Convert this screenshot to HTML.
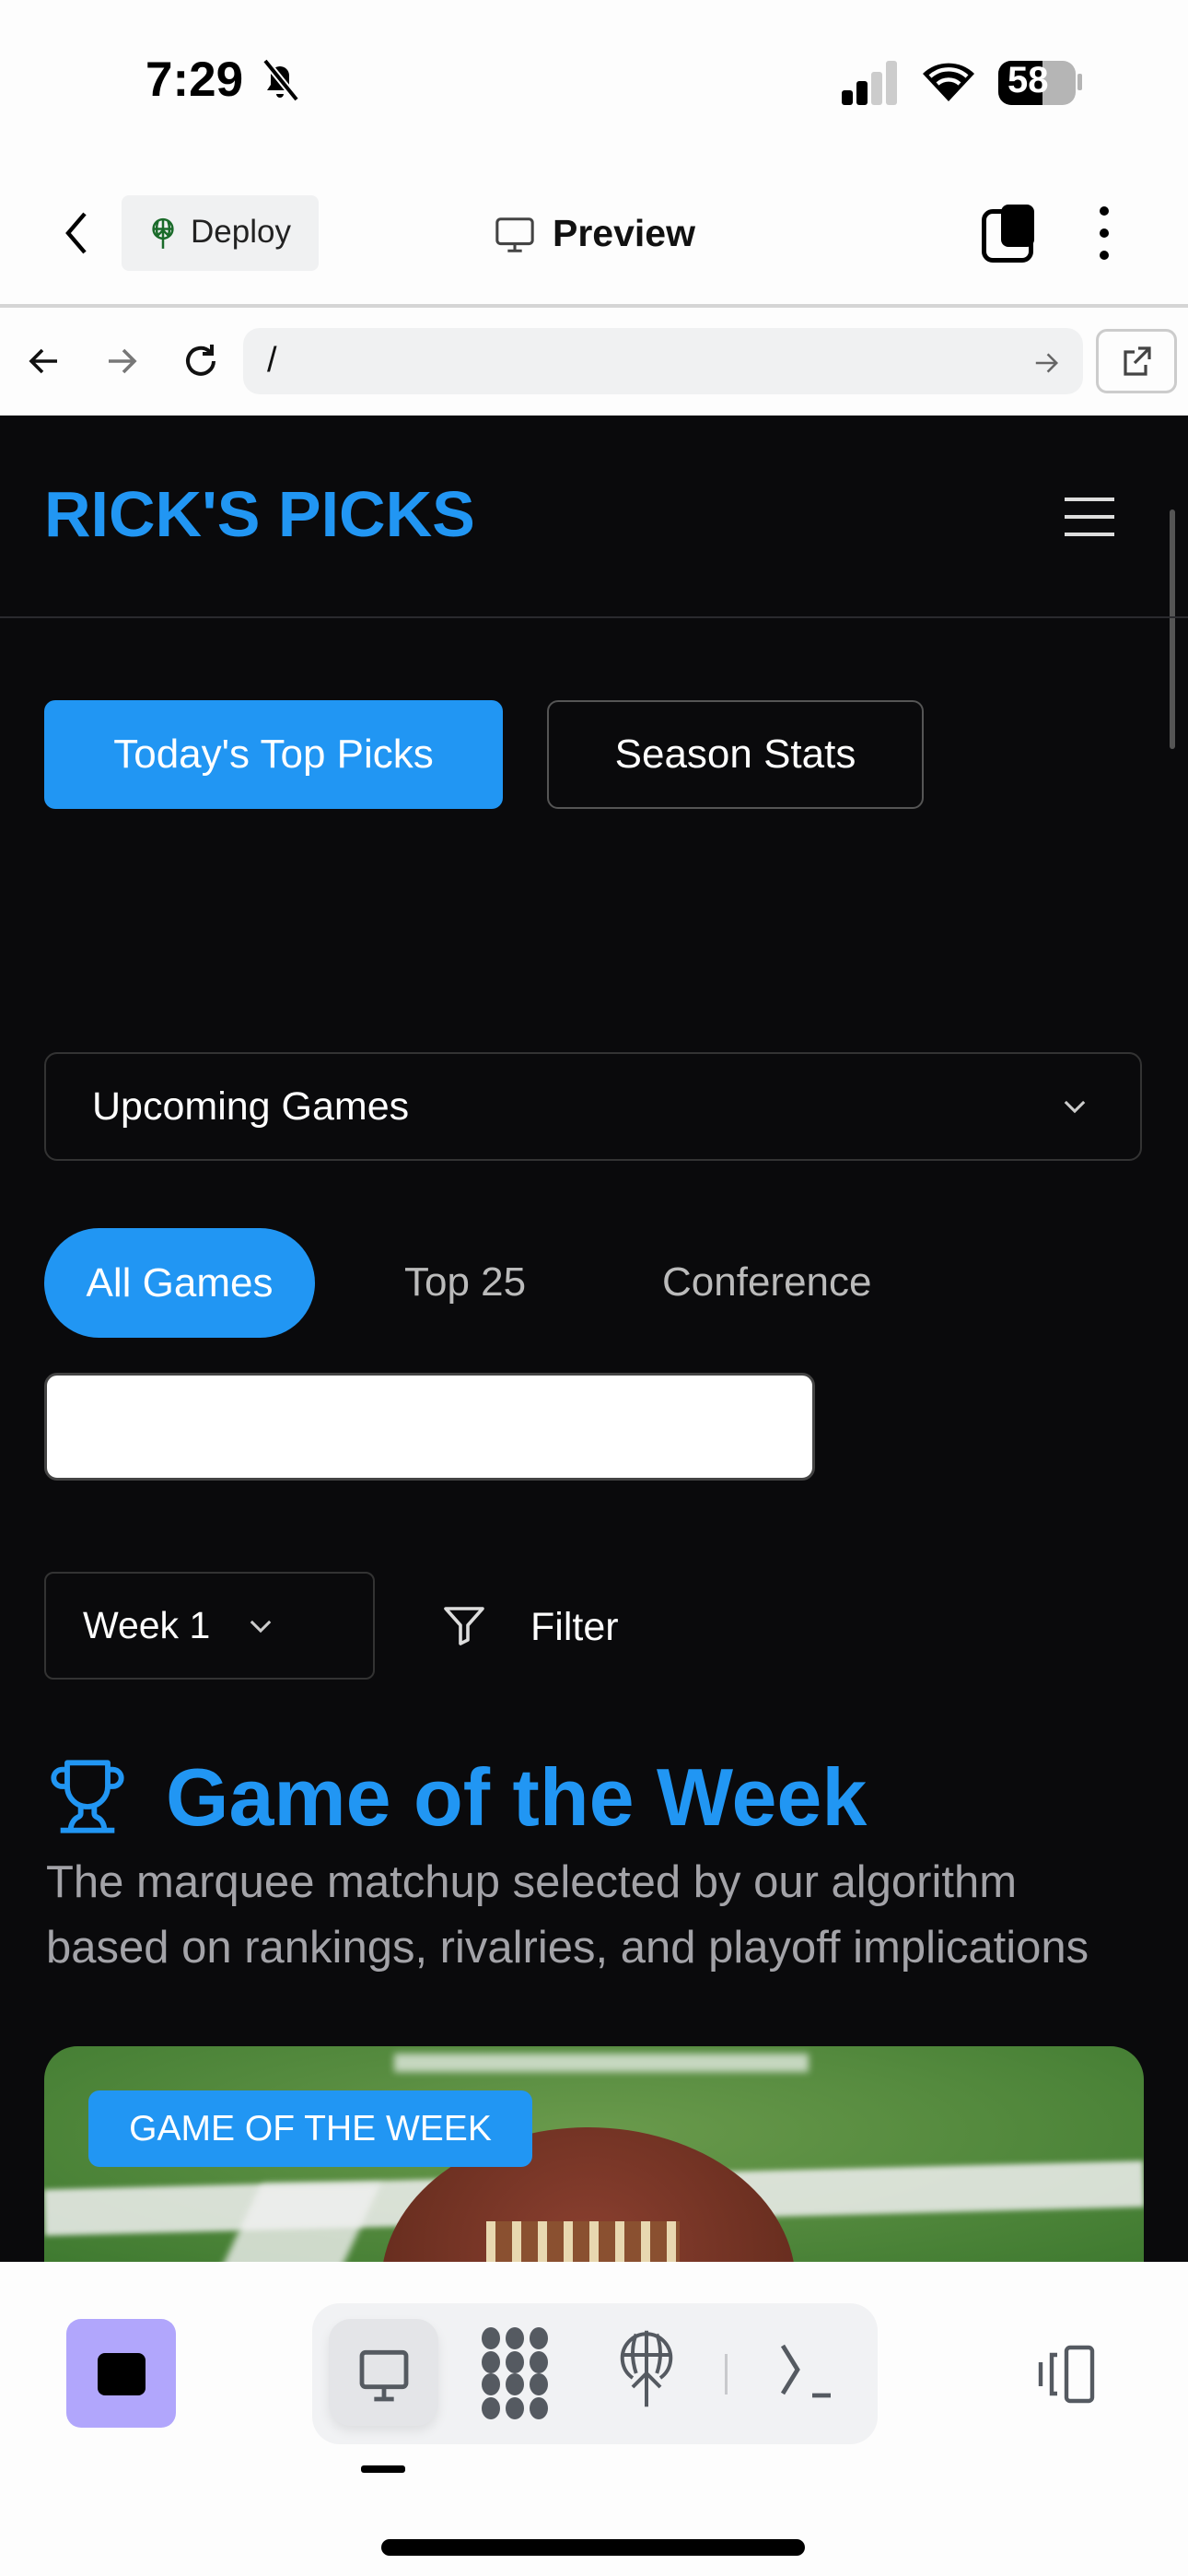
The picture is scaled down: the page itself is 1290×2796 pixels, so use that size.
<!DOCTYPE html>
<html><head><meta charset="utf-8"><style>
*{margin:0;padding:0;box-sizing:border-box}
html,body{width:1290px;height:2796px;overflow:hidden}
body{background:#0a0a0c;font-family:"Liberation Sans",sans-serif;position:relative}
.a{position:absolute}
.t{color:#fff}
</style></head><body>
<div class="a" style="left:0;top:0;width:1290px;height:451px;background:#fdfdfd"></div>
<div class="a" style="left:158px;top:56px;font-size:53px;font-weight:bold;color:#000">7:29</div>
<svg class="a" style="left:280px;top:62px" width="48" height="50" viewBox="0 0 24 25"><path d="M5 18h14l-2-3v-5a5 5 0 0 0-10 0v5z M10 20a2 2 0 0 0 4 0" fill="#000"/><path d="M4 2l17 21" stroke="#fdfdfd" stroke-width="4"/><path d="M4 2l17 21" stroke="#000" stroke-width="2"/></svg>
<div class="a" style="left:914px;top:98px;width:12px;height:16px;background:#000;border-radius:3px"></div>
<div class="a" style="left:930px;top:88px;width:12px;height:26px;background:#000;border-radius:3px"></div>
<div class="a" style="left:946px;top:78px;width:12px;height:36px;background:#ccc;border-radius:3px"></div>
<div class="a" style="left:962px;top:66px;width:12px;height:48px;background:#ccc;border-radius:3px"></div>
<svg class="a" style="left:1000px;top:62px" width="60" height="52" viewBox="0 0 30 26"><path d="M15 24L1 9a20 20 0 0 1 28 0z" fill="#000"/><path d="M5 10.5a15 15 0 0 1 20 0M9 14.5a9 9 0 0 1 12 0" stroke="#fdfdfd" stroke-width="2.2" fill="none"/></svg>
<div class="a" style="left:1084px;top:66px;width:84px;height:48px;border-radius:14px;background:#b5b5b5;overflow:hidden"><div style="width:48px;height:48px;background:#000"></div></div>
<div class="a" style="left:1170px;top:80px;width:5px;height:18px;background:#b5b5b5;border-radius:2px"></div>
<div class="a" style="left:1094px;top:65px;font-size:40px;font-weight:bold;color:#fff">58</div>
<svg class="a" style="left:68px;top:228px" width="30" height="50" viewBox="0 0 15 25"><path d="M12 2L3 12.5 12 23" stroke="#000" stroke-width="2.2" fill="none"/></svg>
<div class="a" style="left:132px;top:212px;width:214px;height:82px;background:#f0f1f2;border-radius:8px"></div>
<svg class="a" style="left:160px;top:236px" width="34" height="36" viewBox="0 0 24 26"><g stroke="#1a6b2a" stroke-width="1.8" fill="none"><circle cx="12" cy="9" r="7.5"/><path d="M4.5 9h15M12 1.5v23M8 3q-2 6 0 12M16 3q2 6 0 12M7 15l5-5 5 5"/></g></svg>
<div class="a" style="left:207px;top:232px;font-size:35px;color:#222">Deploy</div>
<svg class="a" style="left:536px;top:232px" width="46" height="46" viewBox="0 0 24 24"><g stroke="#444" stroke-width="1.6" fill="none"><rect x="2" y="3" width="20" height="14" rx="2"/><path d="M12 17v4M8 21h8"/></g></svg>
<div class="a" style="left:600px;top:230px;font-size:41px;font-weight:bold;color:#111">Preview</div>
<div class="a" style="left:1066px;top:227px;width:56px;height:58px;border:5px solid #000;border-radius:12px"></div>
<div class="a" style="left:1087px;top:222px;width:36px;height:46px;background:#000;border-radius:8px"></div>
<div class="a" style="left:1194px;top:224px;width:10px;height:10px;border-radius:5px;background:#000"></div>
<div class="a" style="left:1194px;top:248px;width:10px;height:10px;border-radius:5px;background:#000"></div>
<div class="a" style="left:1194px;top:272px;width:10px;height:10px;border-radius:5px;background:#000"></div>
<div class="a" style="left:0;top:330px;width:1290px;height:4px;background:#d5d5d5"></div>
<svg class="a" style="left:28px;top:372px" width="40" height="40" viewBox="0 0 20 20"><path d="M17 10H3M9 4l-6 6 6 6" stroke="#111" stroke-width="1.8" fill="none"/></svg>
<svg class="a" style="left:112px;top:372px" width="40" height="40" viewBox="0 0 20 20"><path d="M3 10h14M11 4l6 6-6 6" stroke="#777" stroke-width="1.8" fill="none"/></svg>
<svg class="a" style="left:196px;top:370px" width="44" height="44" viewBox="0 0 22 22"><path d="M18 11a7 7 0 1 1-2-5M17 2v5h-5" stroke="#111" stroke-width="2" fill="none"/></svg>
<div class="a" style="left:264px;top:356px;width:912px;height:72px;background:#f0f1f2;border-radius:18px"></div>
<div class="a" style="left:290px;top:370px;font-size:38px;color:#111">/</div>
<svg class="a" style="left:1120px;top:378px" width="32" height="32" viewBox="0 0 20 20"><path d="M3 10h14M11 4l6 6-6 6" stroke="#666" stroke-width="1.6" fill="none"/></svg>
<div class="a" style="left:1190px;top:357px;width:88px;height:70px;border:3px solid #ccc;border-radius:12px;background:#fdfdfd"></div>
<svg class="a" style="left:1216px;top:372px" width="36" height="40" viewBox="0 0 18 20"><path d="M8 5H3v12h11v-5M10 3h6v6M16 3l-8 8" stroke="#444" stroke-width="1.6" fill="none"/></svg>

<div class="a" style="left:48px;top:518px;font-size:70px;font-weight:bold;color:#2196f3">RICK'S PICKS</div>
<div class="a" style="left:1156px;top:540px;width:54px;height:4px;background:#ddd"></div>
<div class="a" style="left:1156px;top:559px;width:54px;height:4px;background:#ddd"></div>
<div class="a" style="left:1156px;top:578px;width:54px;height:4px;background:#ddd"></div>
<div class="a" style="left:1270px;top:553px;width:6px;height:260px;background:#555;border-radius:3px"></div>
<div class="a" style="left:0;top:669px;width:1290px;height:2px;background:#2a2a2e"></div>
<div class="a t" style="left:48px;top:760px;width:498px;height:118px;background:#2196f3;border-radius:12px;font-size:44px;line-height:118px;text-align:center">Today's Top Picks</div>
<div class="a t" style="left:594px;top:760px;width:409px;height:118px;border:2px solid #555;border-radius:12px;font-size:44px;line-height:114px;text-align:center">Season Stats</div>
<div class="a t" style="left:48px;top:1142px;width:1192px;height:118px;border:2px solid #333;border-radius:14px;font-size:43px;line-height:114px;padding-left:50px">Upcoming Games</div>
<svg class="a" style="left:1150px;top:1184px" width="34" height="34" viewBox="0 0 20 20"><path d="M4 7l6 6 6-6" stroke="#ccc" stroke-width="1.8" fill="none"/></svg>
<div class="a t" style="left:48px;top:1333px;width:294px;height:119px;background:#2196f3;border-radius:60px;font-size:44px;line-height:119px;text-align:center">All Games</div>
<div class="a" style="left:439px;top:1367px;font-size:44px;color:#bbb">Top 25</div>
<div class="a" style="left:719px;top:1367px;font-size:44px;color:#bbb">Conference</div>
<div class="a" style="left:48px;top:1490px;width:837px;height:117px;background:#fff;border:3px solid #444;border-radius:14px"></div>
<div class="a t" style="left:48px;top:1706px;width:359px;height:117px;border:2px solid #333;border-radius:10px;font-size:41px;line-height:113px;padding-left:40px">Week 1</div>
<svg class="a" style="left:266px;top:1748px" width="34" height="34" viewBox="0 0 20 20"><path d="M4 7l6 6 6-6" stroke="#ccc" stroke-width="1.8" fill="none"/></svg>
<svg class="a" style="left:480px;top:1742px" width="48" height="46" viewBox="0 0 24 23"><path d="M2 2h20l-8 9v8l-4 2V11z" stroke="#ddd" stroke-width="1.8" fill="none" stroke-linejoin="round"/></svg>
<div class="a t" style="left:576px;top:1742px;font-size:43px">Filter</div>
<svg class="a" style="left:50px;top:1906px" width="90" height="88" viewBox="0 0 24 24"><g stroke="#2196f3" stroke-width="1.6" fill="none" stroke-linejoin="round"><path d="M6 9H4.5a2.5 2.5 0 0 1 0-5H6M18 9h1.5a2.5 2.5 0 0 0 0-5H18M4 22h16M10 14.7V17c0 .6-.5 1-1 1.2C7.9 18.8 7 20.2 7 22M14 14.7V17c0 .6.5 1 1 1.2 1.2.6 2 2 2 3.8M18 2H6v7a6 6 0 0 0 12 0z"/></g></svg>
<div class="a" style="left:180px;top:1900px;font-size:88px;font-weight:bold;color:#2196f3">Game of the Week</div>
<div class="a" style="left:50px;top:2008px;font-size:49px;line-height:71px;color:#a3a3a8;width:1140px">The marquee matchup selected by our algorithm based on rankings, rivalries, and playoff implications</div>
<div class="a" style="left:48px;top:2221px;width:1194px;height:234px;border-radius:36px 36px 0 0;overflow:hidden;background:radial-gradient(ellipse at 50% 40%,#6a9a4c,#3f7a30)">
 <div class="a" style="left:380px;top:8px;width:450px;height:20px;background:rgba(235,240,235,.75);filter:blur(4px)"></div>
 <div class="a" style="left:0;top:140px;width:1194px;height:50px;background:rgba(240,240,240,.85);filter:blur(3px);transform:rotate(-1.5deg)"></div>
 <div class="a" style="left:200px;top:150px;width:130px;height:150px;background:rgba(240,240,240,.8);filter:blur(4px);transform:skewX(-25deg)"></div>
 <div class="a" style="left:366px;top:88px;width:450px;height:340px;border-radius:50%;background:radial-gradient(ellipse at 50% 40%,#8b4030,#5a2618)"></div>
 <div class="a" style="left:480px;top:190px;width:210px;height:50px;background:repeating-linear-gradient(90deg,#e8d8b0 0 10px,#8a5030 10px 28px)"></div>
</div>
<div class="a t" style="left:96px;top:2269px;width:482px;height:83px;background:#2196f3;border-radius:12px;font-size:39px;line-height:83px;text-align:center">GAME OF THE WEEK</div>

<div class="a" style="left:0;top:2455px;width:1290px;height:341px;background:#fdfdfd"></div>
<div class="a" style="left:72px;top:2517px;width:119px;height:118px;background:#b1a6fc;border-radius:16px"></div>
<div class="a" style="left:106px;top:2554px;width:52px;height:46px;background:#000;border-radius:8px"></div>
<div class="a" style="left:339px;top:2500px;width:614px;height:153px;background:#f1f2f4;border-radius:30px"></div>
<div class="a" style="left:357px;top:2517px;width:119px;height:116px;background:#e4e5e8;border-radius:24px;box-shadow:0 6px 12px rgba(0,0,0,.08)"></div>
<svg class="a" style="left:384px;top:2548px" width="66" height="64" viewBox="0 0 24 24"><g stroke="#555a61" stroke-width="1.8" fill="none"><rect x="3" y="2" width="18" height="14" rx="1.5"/><path d="M12 16v5M8 21h8"/></g></svg>
<svg class="a" style="left:521px;top:2524px" width="76" height="104" viewBox="0 0 76 104"><g fill="#555a61"><ellipse cx="12" cy="14" rx="10" ry="12"/><ellipse cx="38" cy="14" rx="10" ry="12"/><ellipse cx="64" cy="14" rx="10" ry="12"/><ellipse cx="12" cy="40" rx="10" ry="12"/><ellipse cx="38" cy="40" rx="10" ry="12"/><ellipse cx="64" cy="40" rx="10" ry="12"/><ellipse cx="12" cy="64" rx="10" ry="12"/><ellipse cx="38" cy="64" rx="10" ry="12"/><ellipse cx="64" cy="64" rx="10" ry="12"/><ellipse cx="12" cy="90" rx="10" ry="12"/><ellipse cx="38" cy="90" rx="10" ry="12"/><ellipse cx="64" cy="90" rx="10" ry="12"/></g></svg>
<svg class="a" style="left:672px;top:2526px" width="60" height="90" viewBox="0 0 24 36"><g stroke="#555a61" stroke-width="1.6" fill="none"><path d="M6 22A10.5 10.5 0 1 1 18 22"/><path d="M1.5 12h21M12 1.5v33M7.5 3q-3 8 0 17M16.5 3q3 8 0 17M6 26l6-6 6 6"/></g></svg>
<div class="a" style="left:787px;top:2555px;width:3px;height:44px;background:#c8c9cc"></div>
<svg class="a" style="left:844px;top:2540px" width="62" height="66" viewBox="0 0 31 33"><path d="M3 3l8 13-8 13M19 30h10" stroke="#555a61" stroke-width="2.4" fill="none"/></svg>
<svg class="a" style="left:1122px;top:2544px" width="72" height="66" viewBox="0 0 36 33"><g stroke="#555a61" stroke-width="2.2" fill="none"><rect x="18" y="2" width="14" height="29" rx="2"/><path d="M13 6h-3v21h3M4 10v13"/></g></svg>
<div class="a" style="left:392px;top:2676px;width:48px;height:8px;background:#000;border-radius:3px"></div>
<div class="a" style="left:414px;top:2756px;width:460px;height:18px;background:#000;border-radius:9px"></div>
</body></html>
